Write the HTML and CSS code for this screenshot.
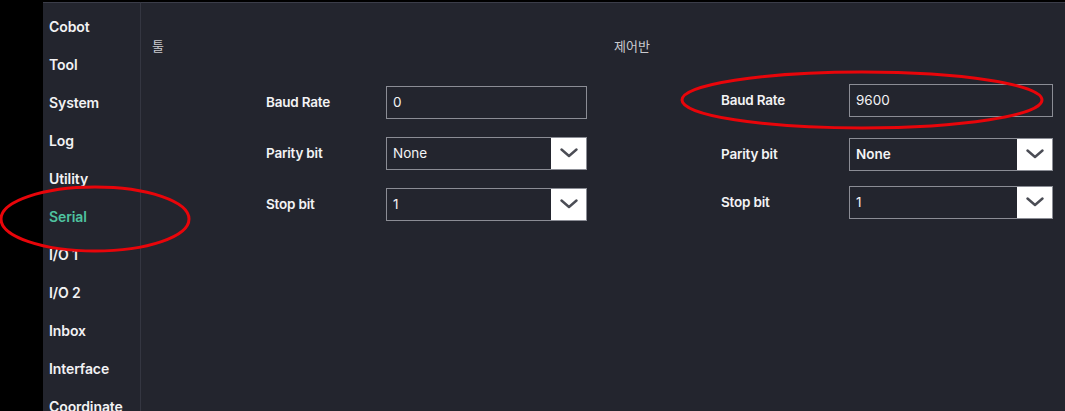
FILE: index.html
```html
<!DOCTYPE html>
<html lang="ko">
<head>
<meta charset="utf-8">
<title>Serial</title>
<link rel="stylesheet" href="styles.css">
</head>
<body>
<div class="screen">
  <div class="strip"></div>
  <nav class="sidebar">
    <div class="nav-item">Cobot</div>
    <div class="nav-item">Tool</div>
    <div class="nav-item">System</div>
    <div class="nav-item">Log</div>
    <div class="nav-item">Utility</div>
    <div class="nav-item active">Serial</div>
    <div class="nav-item">I/O 1</div>
    <div class="nav-item">I/O 2</div>
    <div class="nav-item">Inbox</div>
    <div class="nav-item">Interface</div>
    <div class="nav-item">Coordinate</div>
  </nav>
  <main class="main">
    <section class="col">
      <div class="col-title">툴</div>
      <div class="form">
        <div class="row">
          <label class="label">Baud Rate</label>
          <div class="field"><span class="value">0</span></div>
        </div>
        <div class="row">
          <label class="label">Parity bit</label>
          <div class="field select"><span class="value">None</span>
            <span class="btn"><svg width="18" height="10" viewBox="0 0 18 10"><polyline points="1.5,1.5 9,8 16.5,1.5" fill="none" stroke="#4b4d55" stroke-width="2.4" stroke-linecap="round" stroke-linejoin="round"/></svg></span>
          </div>
        </div>
        <div class="row">
          <label class="label">Stop bit</label>
          <div class="field select"><span class="value">1</span>
            <span class="btn"><svg width="18" height="10" viewBox="0 0 18 10"><polyline points="1.5,1.5 9,8 16.5,1.5" fill="none" stroke="#4b4d55" stroke-width="2.4" stroke-linecap="round" stroke-linejoin="round"/></svg></span>
          </div>
        </div>
      </div>
    </section>
    <section class="col right">
      <div class="col-title">제어반</div>
      <div class="form">
        <div class="row">
          <label class="label">Baud Rate</label>
          <div class="field wide"><span class="value">9600</span></div>
        </div>
        <div class="row r2">
          <label class="label">Parity bit</label>
          <div class="field wide select"><span class="value strong">None</span>
            <span class="btn"><svg width="18" height="10" viewBox="0 0 18 10"><polyline points="1.5,1.5 9,8 16.5,1.5" fill="none" stroke="#4b4d55" stroke-width="2.4" stroke-linecap="round" stroke-linejoin="round"/></svg></span>
          </div>
        </div>
        <div class="row r3">
          <label class="label">Stop bit</label>
          <div class="field wide select"><span class="value">1</span>
            <span class="btn"><svg width="18" height="10" viewBox="0 0 18 10"><polyline points="1.5,1.5 9,8 16.5,1.5" fill="none" stroke="#4b4d55" stroke-width="2.4" stroke-linecap="round" stroke-linejoin="round"/></svg></span>
          </div>
        </div>
      </div>
    </section>
  </main>
  <svg class="marks" width="1065" height="411" viewBox="0 0 1065 411">
    <ellipse cx="95" cy="219" rx="94" ry="32" fill="none" stroke="#e8050a" stroke-width="3"/>
    <ellipse cx="862" cy="100" rx="180" ry="28" fill="none" stroke="#e8050a" stroke-width="3"/>
  </svg>
</div>
</body>
</html>
```

FILE: styles.css
```css
html, body {
  margin: 0;
  padding: 0;
  background: #000;
}

.screen {
  position: relative;
  display: flex;
  width: 1065px;
  height: 411px;
  overflow: hidden;
  font-family: Inter, "Noto Sans CJK KR", sans-serif;
}

.strip {
  width: 43px;
  flex: none;
  background: #000;
}

.sidebar {
  width: 97px;
  flex: none;
  background: #23252e;
  border-top: 1px solid #3b3d49;
  border-right: 1px solid #343641;
  margin-top: 2px;
  padding-top: 5px;
  display: flex;
  flex-direction: column;
}

.nav-item {
  height: 38px;
  line-height: 38px;
  padding-left: 6px;
  color: #f2f2f4;
  font-weight: 600;
  font-size: 14px;
  letter-spacing: -0.1px;
  white-space: nowrap;
}

.nav-item.active {
  color: #4fc3a0;
}

.main {
  flex: 1;
  display: flex;
  background: #23252e;
  border-top: 1px solid #3b3d49;
  margin-top: 2px;
}

.col {
  width: 462px;
  flex: none;
  padding-top: 33px;
}

.col-title {
  padding-left: 11px;
  height: 20px;
  line-height: 20px;
  font-size: 13px;
  color: #c9cacf;
  font-family: "Noto Sans CJK KR", sans-serif;
}

.form {
  margin-top: 30px;
  display: flex;
  flex-direction: column;
  gap: 19px;
}

.row {
  display: flex;
  align-items: center;
  height: 32px;
}

.col.right .form {
  margin-top: 28px;
}

.col.right .row.r2 {
  margin-top: 3px;
}

.col.right .row.r3 {
  margin-top: -3px;
}

.label {
  width: 120px;
  margin-left: 125px;
  color: #f3f3f5;
  font-weight: 600;
  font-size: 13.5px;
  letter-spacing: -0.2px;
}

.col.right .label {
  margin-left: 118px;
  width: 128px;
}

.field {
  position: relative;
  box-sizing: border-box;
  width: 201px;
  height: 33px;
  border: 1px solid #8b8d95;
  display: flex;
  align-items: center;
  padding-left: 6px;
  color: #f3f3f5;
  font-size: 13.5px;
}

.field.wide {
  width: 204px;
}

.value.strong {
  font-weight: 600;
}

.select .btn {
  margin-left: auto;
  width: 35px;
  height: 31px;
  background: #ffffff;
  display: flex;
  align-items: center;
  justify-content: center;
}

.marks {
  position: absolute;
  left: 0;
  top: 0;
  pointer-events: none;
}
```
